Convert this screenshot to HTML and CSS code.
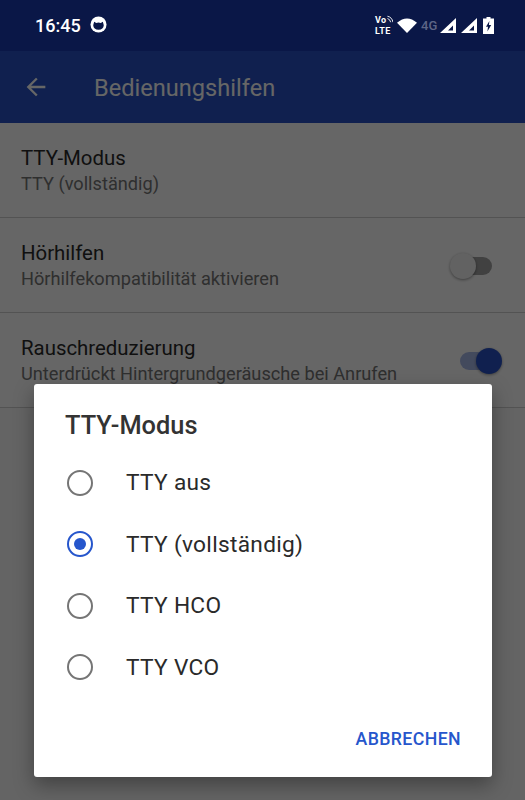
FILE: index.html
```html
<!DOCTYPE html>
<html>
<head>
    <title>Bedienungshilfen</title>
    <link rel="stylesheet" href="styles.css">
</head>
<body>
    <div class="phone">
        <div class="status-bar">
            <div class="status-left">
                <span class="clock">16:45</span>
                <svg class="cat" width="17" height="17" viewBox="0 0 18 18">
                    <circle cx="9" cy="9" r="8.5" fill="#fff"/>
                    <path d="M3.4 9.8 L4.4 6 L6.6 7.3 Q9 6.7 11.4 7.3 L13.6 6 L14.6 9.8 Q14.2 14.4 9 14.6 Q3.8 14.4 3.4 9.8 Z" fill="#0a1747"/>
                </svg>
            </div>
            <div class="status-right">
                <div class="volte">
                    <span>Vo<svg width="7" height="8" viewBox="0 0 7 8"><path d="M0.5 1 Q5.5 2 6.5 7.5 M0.5 3.5 Q3.2 4 4 7.5" fill="none" stroke="#fff" stroke-width="1"/></svg></span>
                    <span>LTE</span>
                </div>
                <svg width="20" height="15" viewBox="0 0 20 15"><path d="M0 4.8 Q10 -3.8 20 4.8 L10 15 Z" fill="#fff"/></svg>
                <span class="net">4G</span>
                <svg class="signal" width="16" height="15" viewBox="0 0 16 15"><path d="M16 0 V15 H0 Z M13 7.4 L8 12.6 H13 Z" fill="#fff" fill-rule="evenodd"/></svg>
                <svg class="signal" width="16" height="15" viewBox="0 0 16 15"><path d="M16 0 V15 H0 Z M13 7.4 L8 12.6 H13 Z" fill="#fff" fill-rule="evenodd"/></svg>
                <svg class="battery" width="11" height="17" viewBox="0 0 11 17"><path d="M3.5 0 H7.5 V1.6 H11 V17 H0 V1.6 H3.5 Z" fill="#fff"/><path d="M6.4 4 L3 9.8 H5 L4.4 14.4 L8.2 8 H5.9 Z" fill="#0a1747"/></svg>
            </div>
        </div>

        <div class="app-bar">
            <svg class="back" width="28" height="28" viewBox="0 0 24 24"><path d="M20 11H7.8l5.6-5.6L12 4l-8 8 8 8 1.4-1.4L7.8 13H20z" fill="#fff"/></svg>
            <span class="app-title">Bedienungshilfen</span>
        </div>

        <div class="settings">
            <div class="row">
                <div class="row-text">
                    <div class="row-title">TTY-Modus</div>
                    <div class="row-sub">TTY (vollständig)</div>
                </div>
            </div>
            <div class="row">
                <div class="row-text">
                    <div class="row-title">Hörhilfen</div>
                    <div class="row-sub">Hörhilfekompatibilität aktivieren</div>
                </div>
                <div class="switch"><div class="thumb"></div></div>
            </div>
            <div class="row">
                <div class="row-text">
                    <div class="row-title">Rauschreduzierung</div>
                    <div class="row-sub">Unterdrückt Hintergrundgeräusche bei Anrufen</div>
                </div>
                <div class="switch on"><div class="thumb"></div></div>
            </div>
        </div>

        <div class="scrim">
            <div class="dialog">
                <h2 class="dialog-title">TTY-Modus</h2>
                <div class="option"><span class="radio"></span>TTY aus</div>
                <div class="option"><span class="radio checked"></span>TTY (vollständig)</div>
                <div class="option"><span class="radio"></span>TTY HCO</div>
                <div class="option"><span class="radio"></span>TTY VCO</div>
                <div class="dialog-actions"><span class="cancel">ABBRECHEN</span></div>
            </div>
        </div>
    </div>
</body>
</html>
```

FILE: styles.css
```css
html, body {
    margin: 0;
    height: 100%;
}
body {
    font-family: Roboto, "Liberation Sans", sans-serif;
    overflow: hidden;
}
.phone {
    position: relative;
    width: 525px;
    height: 800px;
    background: #fafafa;
    overflow: hidden;
}
.status-bar {
    height: 51px;
    background: #0a1747;
    display: flex;
    align-items: center;
    justify-content: space-between;
    padding: 0 31px 0 35px;
    box-sizing: border-box;
    position: relative;
    z-index: 2;
}
.status-left {
    display: flex;
    align-items: center;
    gap: 9px;
}
.clock {
    color: #fff;
    font-size: 18px;
    font-weight: 500;
}
.cat {
    margin-top: -2px;
}
.status-right {
    display: flex;
    align-items: center;
    gap: 4px;
}
.volte {
    color: #fff;
    font-size: 9px;
    font-weight: 700;
    letter-spacing: 0.4px;
    line-height: 10.6px;
    display: flex;
    flex-direction: column;
    width: 18px;
}
.volte span {
    display: flex;
    align-items: flex-start;
}
.net {
    color: #5d6586;
    font-size: 13px;
    font-weight: 500;
    width: 15px;
}
.signal + .signal {
    margin-left: 1px;
}
.battery {
    margin-left: 2px;
}
.app-bar {
    height: 72px;
    background: #2852c5;
    display: flex;
    align-items: center;
}
.back {
    margin-left: 22px;
}
.app-title {
    color: #fff;
    font-size: 23.6px;
    margin-left: 44px;
    padding-top: 2px;
}
.settings {
    background: #fff;
}
.row {
    height: 95px;
    box-sizing: border-box;
    padding: 3px 33px 0 21px;
    border-bottom: 1px solid #cfcfcf;
    display: flex;
    align-items: center;
    justify-content: space-between;
}
.row-title {
    font-size: 20.4px;
    color: #2a2a2a;
    line-height: 25px;
}
.row-sub {
    font-size: 18.2px;
    color: #757575;
    line-height: 26px;
}
.switch {
    position: relative;
    top: -1px;
    width: 32px;
    height: 18px;
    border-radius: 9px;
    background: #a3a3a3;
}
.thumb {
    position: absolute;
    top: -4px;
    left: -10px;
    width: 26px;
    height: 26px;
    border-radius: 50%;
    background: #f5f5f5;
    box-shadow: 0 1px 3px rgba(0,0,0,0.4);
}
.switch.on {
    background: #a9b9e8;
}
.switch.on .thumb {
    left: 16px;
    background: #2852c5;
}
.scrim {
    position: absolute;
    inset: 0;
    background: rgba(0,0,0,0.6);
    display: flex;
    z-index: 1;
}
.dialog {
    margin: 384px 33px 0 34px;
    width: 458px;
    height: 393px;
    box-sizing: border-box;
    background: #fff;
    border-radius: 3px;
    box-shadow: 0 8px 20px rgba(0,0,0,0.35);
    display: flex;
    flex-direction: column;
}
.dialog-title {
    margin: 0;
    padding: 25px 31px 11px;
    font-size: 25.4px;
    font-weight: 500;
    line-height: 32px;
    color: #333;
}
.option {
    height: 61.5px;
    flex: none;
    display: flex;
    align-items: center;
    padding-left: 33px;
    font-size: 22.7px;
    letter-spacing: 0.3px;
    color: #2a2a2a;
}
.radio {
    width: 26px;
    height: 26px;
    box-sizing: border-box;
    border: 2.8px solid #757575;
    border-radius: 50%;
    margin-right: 33px;
    display: flex;
    align-items: center;
    justify-content: center;
}
.radio.checked {
    border-color: #2656cc;
}
.radio.checked::after {
    content: "";
    width: 12px;
    height: 12px;
    border-radius: 50%;
    background: #2656cc;
}
.dialog-actions {
    display: flex;
    justify-content: flex-end;
    padding: 31px 31px 0;
}
.cancel {
    color: #2656cc;
    font-size: 17.7px;
    font-weight: 500;
    letter-spacing: 0.4px;
}
```
